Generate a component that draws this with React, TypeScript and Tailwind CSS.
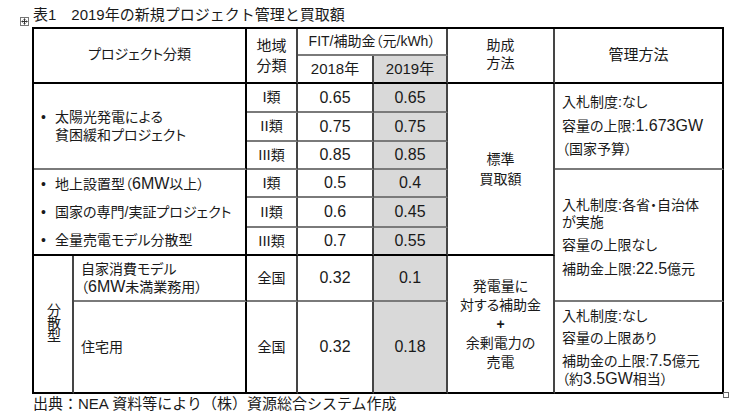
import React from "react";

const L = ({ children }: { children: React.ReactNode }) => (
  <span className="text-[16px]">{children}</span>
);

const V = "border-r-2 border-r-[#454545]";
const VB = "border-r-2 border-r-black";
const H = "border-b-2 border-b-[#7a7a7a]";
const HB = "border-b-2 border-b-black";
const G = "bg-[#d9d9d9]";

function Num({ v, gray, bottom }: { v: string; gray?: boolean; bottom?: string }) {
  return (
    <td className={`${V} ${bottom ?? H} ${gray ? G : ""} text-center align-middle text-[16px] p-0`}>
      {v}
    </td>
  );
}

function Cls({ v, bottom }: { v: string; bottom?: string }) {
  return (
    <td className={`${V} ${bottom ?? H} text-center align-middle text-[14px] p-0`}>
      <span className="text-[15px]">{v}</span>類
    </td>
  );
}

export default function App() {
  return (
    <div className="w-[747px] h-[416px] bg-white relative text-[#1a1a1a] font-['Liberation_Sans','Noto_Sans_CJK_JP',sans-serif] overflow-hidden">
      <div className="flex items-end h-[27px] pl-[20px] pb-[1px]">
        <svg width="9" height="9" viewBox="0 0 9 9" className="mr-[4px]">
          <rect x="0.5" y="0.5" width="8" height="8" fill="white" stroke="#777" strokeWidth="1" />
          <path d="M4.5 2 V7 M2 4.5 H7" stroke="#333" strokeWidth="1" />
          <path d="M3.5 2.5 L4.5 1.5 L5.5 2.5 M3.5 6.5 L4.5 7.5 L5.5 6.5 M2.5 3.5 L1.5 4.5 L2.5 5.5 M6.5 3.5 L7.5 4.5 L6.5 5.5" stroke="#333" strokeWidth="0.8" fill="none" />
        </svg>
        <div className="text-[15px] leading-[18px] mb-[2px]">
          表1　2019年の新規プロジェクト管理と買取額
        </div>
      </div>
      <div className="pl-[32px] relative">
        <table className="table-fixed border-separate border-spacing-0 border-t-2 border-l-2 border-black w-[692px] text-[14px] [font-feature-settings:'palt']">
          <colgroup>
            <col className="w-[40px]" />
            <col className="w-[173px]" />
            <col className="w-[51px]" />
            <col className="w-[76px]" />
            <col className="w-[74px]" />
            <col className="w-[107px]" />
            <col className="w-[169px]" />
          </colgroup>
          <tbody>
            <tr className="h-[27px]">
              <td colSpan={2} rowSpan={2} className={`${VB} ${HB} text-center align-middle p-0 pb-[2px]`}>
                プロジェクト分類
              </td>
              <td rowSpan={2} className={`${V} ${HB} text-center align-middle p-0 leading-[20px] text-[15px]`}>
                地域
                <br />
                分類
              </td>
              <td colSpan={2} className={`${V} ${H} text-center align-middle p-0 text-[14px]`}>
                FIT/補助金（元/kWh）
              </td>
              <td rowSpan={2} className={`${V} ${HB} text-center align-middle p-0 leading-[18px] pb-[4px]`}>
                助成
                <br />
                方法
              </td>
              <td rowSpan={2} className={`${VB} ${HB} text-center align-middle p-0 text-[15px]`}>
                管理方法
              </td>
            </tr>
            <tr className="h-[28px]">
              <td className={`${V} ${HB} text-center align-middle p-0 text-[15px]`}>2018年</td>
              <td className={`${V} ${HB} ${G} text-center align-middle p-0 text-[15px]`}>2019年</td>
            </tr>

            <tr className="h-[29px]">
              <td colSpan={2} rowSpan={3} className={`${VB} ${H} align-middle p-0 pl-[7px] leading-[18px]`}>
                <div className="flex">
                  <span className="w-[14px] shrink-0">•</span>
                  <span>
                    太陽光発電による
                    <br />
                    貧困緩和プロジェクト
                  </span>
                </div>
              </td>
              <Cls v="I" />
              <Num v="0.65" />
              <Num v="0.65" gray />
              <td rowSpan={6} className={`${V} ${HB} text-center align-middle p-0 leading-[20px] text-[14px]`}>
                標準
                <br />
                買取額
              </td>
              <td rowSpan={3} className={`${VB} ${H} align-middle p-0 pl-[7px]`}>
                <div className="flex flex-col gap-[6px] leading-[17px]">
                  <div>入札制度:なし</div>
                  <div>
                    容量の上限:<L>1.673GW</L>
                  </div>
                  <div>（国家予算）</div>
                </div>
              </td>
            </tr>
            <tr className="h-[29px]">
              <Cls v="II" />
              <Num v="0.75" />
              <Num v="0.75" gray />
            </tr>
            <tr className="h-[28px]">
              <Cls v="III" />
              <Num v="0.85" />
              <Num v="0.85" gray />
            </tr>

            <tr className="h-[28px]">
              <td colSpan={2} rowSpan={3} className={`${VB} ${HB} align-middle p-0 pl-[7px] leading-[28px]`}>
                <div className="flex">
                  <span className="w-[14px] shrink-0">•</span>
                  <span>
                    地上設置型（<L>6MW</L>以上）
                  </span>
                </div>
                <div className="flex">
                  <span className="w-[14px] shrink-0">•</span>
                  <span>国家の専門/実証プロジェクト</span>
                </div>
                <div className="flex">
                  <span className="w-[14px] shrink-0">•</span>
                  <span>全量売電モデル分散型</span>
                </div>
              </td>
              <Cls v="I" />
              <Num v="0.5" />
              <Num v="0.4" gray />
              <td rowSpan={4} className={`${VB} ${H} align-middle p-0 pl-[7px]`}>
                <div className="flex flex-col gap-[6px] leading-[17px] pt-[4px]">
                  <div>
                    入札制度:各省・自治体
                    <br />
                    が実施
                  </div>
                  <div>容量の上限なし</div>
                  <div>
                    補助金上限:<L>22.5</L>億元
                  </div>
                </div>
              </td>
            </tr>
            <tr className="h-[29px]">
              <Cls v="II" />
              <Num v="0.6" />
              <Num v="0.45" gray />
            </tr>
            <tr className="h-[28px]">
              <Cls v="III" bottom={HB} />
              <Num v="0.7" bottom={HB} />
              <Num v="0.55" gray bottom={HB} />
            </tr>

            <tr className="h-[46px]">
              <td rowSpan={2} className={`${V} ${HB} text-center align-middle p-0 pb-[4px]`}>
                <div className="flex justify-center">
                  <span className="[writing-mode:vertical-rl] text-[14px] leading-[14px] tracking-[-1px] [font-feature-settings:normal]">
                    分散型
                  </span>
                </div>
              </td>
              <td className={`${VB} ${H} align-middle p-0 pl-[7px] leading-[18px]`}>
                自家消費モデル
                <br />
                （<L>6MW</L>未満業務用）
              </td>
              <td className={`${V} ${H} text-center align-middle p-0`}>全国</td>
              <Num v="0.32" />
              <Num v="0.1" gray />
              <td rowSpan={2} className={`${V} ${HB} text-center align-middle p-0 leading-[19px]`}>
                発電量に
                <br />
                対する補助金
                <br />
                <span className="font-bold">+</span>
                <br />
                余剰電力の
                <br />
                売電
              </td>
            </tr>
            <tr className="h-[92px]">
              <td className={`${VB} ${HB} align-middle p-0 pl-[7px]`}>住宅用</td>
              <td className={`${V} ${HB} text-center align-middle p-0`}>全国</td>
              <Num v="0.32" bottom={HB} />
              <Num v="0.18" gray bottom={HB} />
              <td className={`${VB} ${HB} align-middle p-0 pl-[7px]`}>
                <div className="flex flex-col gap-[5px] leading-[17px] pt-[2px]">
                  <div>入札制度:なし</div>
                  <div>容量の上限あり</div>
                  <div>
                    補助金の上限:<L>7.5</L>億元
                    <br />
                    （約<L>3.5GW</L>相当）
                  </div>
                </div>
              </td>
            </tr>
          </tbody>
        </table>
        <div className="absolute left-[723px] top-[365px] w-[6px] h-[6px] border border-[#666] bg-white" />
      </div>
      <div className="pl-[33px] text-[15px] leading-[20px]">
        出典：NEA 資料等により（株）資源総合システム作成
      </div>
    </div>
  );
}
